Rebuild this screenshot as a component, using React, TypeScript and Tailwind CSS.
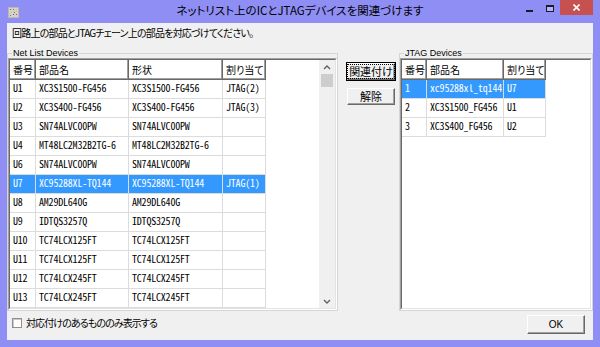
import React from "react";

const jp = "font-['Noto_Sans_CJK_JP','Noto_Sans_CJK_SC',sans-serif] [font-feature-settings:'palt']";
const mono = "font-['Noto_Sans_Mono_CJK_JP','Liberation_Sans',sans-serif]";
const latin = "font-['Liberation_Sans',Arial,sans-serif]";

const netRows = [
  ["U1", "XC3S1500-FG456", "XC3S1500-FG456", "JTAG(2)"],
  ["U2", "XC3S400-FG456", "XC3S400-FG456", "JTAG(3)"],
  ["U3", "SN74ALVC00PW", "SN74ALVC00PW", ""],
  ["U4", "MT48LC2M32B2TG-6", "MT48LC2M32B2TG-6", ""],
  ["U6", "SN74ALVC00PW", "SN74ALVC00PW", ""],
  ["U7", "XC95288XL-TQ144", "XC95288XL-TQ144", "JTAG(1)"],
  ["U8", "AM29DL640G", "AM29DL640G", ""],
  ["U9", "IDTQS3257Q", "IDTQS3257Q", ""],
  ["U10", "TC74LCX125FT", "TC74LCX125FT", ""],
  ["U11", "TC74LCX125FT", "TC74LCX125FT", ""],
  ["U12", "TC74LCX245FT", "TC74LCX245FT", ""],
  ["U13", "TC74LCX245FT", "TC74LCX245FT", ""],
];

const jtagRows = [
  ["1", "xc95288xl_tq144", "U7"],
  ["2", "XC3S1500_FG456", "U1"],
  ["3", "XC3S400_FG456", "U2"],
];

const Chevron = ({ up }: { up?: boolean }) => (
  <svg width="8" height="5" viewBox="0 0 8 5">
    <polyline
      points={up ? "1,4 4,1 7,4" : "1,1 4,4 7,1"}
      fill="none"
      stroke="#606060"
      strokeWidth="1.4"
    />
  </svg>
);

const Scrollbar = () => (
  <div className="w-[16px] shrink-0 bg-[#f0f0f0] flex flex-col items-center">
    <div className="h-[14px] flex items-center justify-center">
      <Chevron up />
    </div>
    <div className="w-[12px] h-[13px] bg-[#cdcdcd]" />
    <div className="flex-1" />
    <div className="h-[14px] flex items-center justify-center">
      <Chevron />
    </div>
  </div>
);

function ListView({
  widths,
  headers,
  rows,
  selected,
  scroll,
}: {
  widths: string[];
  headers: string[];
  rows: string[][];
  selected: number;
  scroll?: boolean;
}) {
  return (
    <div className="flex-1 min-h-0 flex border-t border-l border-t-[#a0a0a0] border-l-[#a0a0a0] border-r border-b border-r-white border-b-white">
      <div className="flex-1 min-w-0 flex border-t border-l border-t-[#696969] border-l-[#696969] border-r border-b border-r-[#e3e3e3] border-b-[#e3e3e3]">
        <div className="flex-1 min-w-0 bg-white overflow-hidden">
          <div className="flex">
            {headers.map((h, i) => (
              <div
                key={h}
                className={`${widths[i]} ${jp} h-[20px] shrink-0 bg-white pl-[3px] pt-[3px] leading-[13px] text-[10px] text-black shadow-[inset_-1px_-1px_0_#696969,inset_-2px_-2px_0_#a0a0a0]`}
              >
                {h}
              </div>
            ))}
          </div>
          {rows.map((r, ri) => (
            <div key={ri} className="flex">
              {r.map((c, ci) => (
                <div
                  key={ci}
                  className={`${widths[ci]} ${mono} h-[19px] shrink-0 border-r border-b border-[#dcdcdc] pl-[3px] pt-[2px] leading-[12px] text-[10px] tracking-[-0.2px] overflow-hidden whitespace-nowrap ${
                    ri === selected ? "bg-[#3399ff] text-white" : "text-black"
                  }`}
                >
                  {c}
                </div>
              ))}
            </div>
          ))}
        </div>
        {scroll && <Scrollbar />}
      </div>
    </div>
  );
}

function WinButton({ label, def }: { label: string; def?: boolean }) {
  return (
    <div className={`h-[19px] w-[50px] flex border ${def ? "border-black" : "border-[#f0f0f0]"}`}>
      <div className="flex-1 flex items-center justify-center bg-[#f0f0f0] border-t border-l border-t-white border-l-white border-r border-b border-r-[#696969] border-b-[#696969] shadow-[inset_-1px_-1px_0_#a0a0a0]">
        <span
          className={`${jp} text-[11px] leading-[13px] text-black px-[1px] ${
            def ? "outline outline-1 outline-dotted outline-black" : ""
          }`}
        >
          {label}
        </span>
      </div>
    </div>
  );
}

const AppIcon = () => (
  <svg width="11" height="11" viewBox="0 0 11 11">
    <rect x="0" y="0" width="11" height="11" fill="#b8b8b8" />
    <rect x="1" y="1" width="9" height="9" fill="#d6d2c8" />
    <rect x="2" y="2" width="1" height="1" fill="#e04040" />
    <rect x="5" y="2" width="1" height="1" fill="#40a040" />
    <rect x="8" y="3" width="1" height="1" fill="#e0c030" />
    <rect x="3" y="5" width="1" height="1" fill="#e0c030" />
    <rect x="6" y="5" width="1" height="1" fill="#e04040" />
    <rect x="2" y="8" width="1" height="1" fill="#40a040" />
    <rect x="5" y="7" width="1" height="1" fill="#4060d0" />
    <rect x="8" y="7" width="1" height="1" fill="#e04040" />
  </svg>
);

export default function App() {
  return (
    <div className="w-[600px] h-[347px] bg-[#8e8ef4] flex flex-col overflow-hidden">
      {/* title bar */}
      <div className="h-[23px] shrink-0 grid grid-cols-[1fr_auto_1fr]">
        <div className="pl-[8px] pt-[7px]">
          <AppIcon />
        </div>
        <div className={`${jp} text-[11.5px] leading-[14px] pt-[3px] text-black`}>
          ネットリスト上のICとJTAGデバイスを関連づけます
        </div>
        <div className="flex justify-end items-start pr-[7px]">
          <div className="w-[7px] h-[2px] bg-[#1a1a2a] mt-[10px] mr-[13px]" />
          <div className="w-[8px] h-[7px] border border-[#1a1a2a] border-t-2 bg-[#b4b4f8] mt-[5px] mr-[6px]" />
          <div className="w-[33px] h-[15px] bg-[#c75050] flex items-center justify-center">
            <svg width="7" height="7" viewBox="0 0 7 7">
              <path d="M0.5 0.5 L6.5 6.5 M6.5 0.5 L0.5 6.5" stroke="white" strokeWidth="1.6" />
            </svg>
          </div>
        </div>
      </div>

      {/* client area */}
      <div className="mx-[7px] mb-[7px] flex-1 bg-[#f0f0f0] flex flex-col">
        <div className={`${jp} h-[25px] shrink-0 pl-[5px] pt-[4px] text-[10px] leading-[12px] tracking-[-0.8px] text-black`}>
          回路上の部品とJTAGチェーン上の部品を対応づけてください。
        </div>

        <div className="h-[263px] shrink-0 flex">
          <fieldset className="w-[331px] shrink-0 border border-[#d5d5d5] flex flex-col min-h-0">
            <legend className={`${latin} ml-[4px] px-[1px] text-[9px] leading-[10px] text-black`}>
              Net List Devices
            </legend>
            <ListView
              widths={["w-[26px]", "w-[93px]", "w-[94px]", "w-[43px]"]}
              headers={["番号", "部品名", "形状", "割り当て"]}
              rows={netRows}
              selected={5}
              scroll
            />
          </fieldset>

          <div className="w-[50px] ml-[8px] mr-[3px] shrink-0 flex flex-col pt-[14px] gap-[6px]">
            <WinButton label="関連付け" def />
            <WinButton label="解除" />
          </div>

          <fieldset className="w-[194px] shrink-0 border border-[#d5d5d5] flex flex-col min-h-0">
            <legend className={`${latin} ml-[4px] px-[1px] text-[9px] leading-[10px] text-black`}>
              JTAG Devices
            </legend>
            <ListView
              widths={["w-[25px]", "w-[77px]", "w-[42px]"]}
              headers={["番号", "部品名", "割り当て"]}
              rows={jtagRows}
              selected={0}
            />
          </fieldset>
        </div>

        <div className="flex-1 flex items-start">
          <div className="ml-[5px] mt-[7px] w-[10px] h-[10px] bg-white border border-[#8f8f8f] shadow-[inset_1px_1px_0_#c8c8c8]" />
          <div className={`${jp} ml-[4px] mt-[5px] text-[10px] leading-[13px] tracking-[-0.9px] text-black`}>
            対応付けのあるもののみ表示する
          </div>
          <div className="flex-1" />
          <div className="mt-[4px] mr-[8px] w-[58px] h-[19px] flex items-center justify-center bg-[#f0f0f0] border-t border-l border-t-white border-l-white border-r border-b border-r-[#696969] border-b-[#696969] shadow-[inset_-1px_-1px_0_#a0a0a0]">
            <span className={`${latin} text-[10px] leading-[12px] text-black`}>OK</span>
          </div>
        </div>
      </div>
    </div>
  );
}
